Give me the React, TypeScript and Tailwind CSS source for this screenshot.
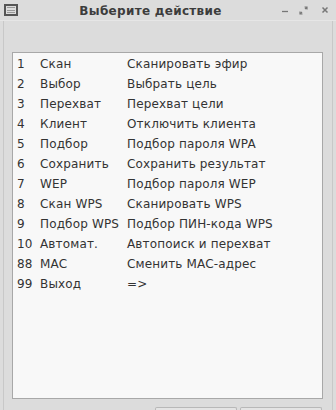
import React from "react";

const rows: [string, string, string][] = [
  ["1", "Скан", "Сканировать эфир"],
  ["2", "Выбор", "Выбрать цель"],
  ["3", "Перехват", "Перехват цели"],
  ["4", "Клиент", "Отключить клиента"],
  ["5", "Подбор", "Подбор пароля WPA"],
  ["6", "Сохранить", "Сохранить результат"],
  ["7", "WEP", "Подбор пароля WEP"],
  ["8", "Скан WPS", "Сканировать WPS"],
  ["9", "Подбор WPS", "Подбор ПИН-кода WPS"],
  ["10", "Автомат.", "Автопоиск и перехват"],
  ["88", "MAC", "Сменить MAC-адрес"],
  ["99", "Выход", "=>"],
];

export default function App() {
  return (
    <div
      className="w-[336px] h-[410px] bg-[#dcdcdc] overflow-hidden flex flex-col text-[#333333]"
      style={{ fontFamily: '"DejaVu Sans", "Liberation Sans", sans-serif' }}
    >
      {/* title bar */}
      <div className="h-[21px] shrink-0 flex items-center relative border-b border-[#e6e6e6]">
        <div className="ml-[4px] w-[14px] h-[12px] border-[2px] border-[#555555] flex flex-col justify-evenly px-[1px]">
          <div className="h-[1px] bg-[#999999]" />
          <div className="h-[1px] bg-[#999999]" />
          <div className="h-[1px] bg-[#999999]" />
        </div>
        <div className="absolute left-0 top-0 w-[300px] h-[21px] flex items-center justify-center pointer-events-none">
          <span className="text-[12px] font-bold text-[#3c3c3c] tracking-[0.3px] ml-[1px]">
            Выберите действие
          </span>
        </div>
        <div className="ml-auto mr-[7px] flex items-center gap-[10px]">
          <svg width="8" height="8" viewBox="0 0 8 8">
            <line x1="1" y1="5.5" x2="7" y2="5.5" stroke="#777" strokeWidth="1.3" />
          </svg>
          <svg width="9" height="9" viewBox="0 0 9 9">
            <path d="M1 8 L3 6 M1 5.5 L1 8 L3.5 8" stroke="#777" strokeWidth="1.2" fill="none" />
            <path d="M8 1 L6 3 M5.5 1 L8 1 L8 3.5" stroke="#777" strokeWidth="1.2" fill="none" />
          </svg>
          <svg width="8" height="8" viewBox="0 0 8 8" className="ml-[3px]">
            <path d="M1.5 1.5 L6.5 6.5 M6.5 1.5 L1.5 6.5" stroke="#777" strokeWidth="1.5" />
          </svg>
        </div>
      </div>

      {/* body */}
      <div className="flex-1 ml-[3px] w-[330px] border-x border-[#c8c8c8] pt-[31px] pl-[8px] pr-[9px] flex flex-col">
        <div className="h-[347px] bg-[#f8f8f8] border border-[#a8a8a8] pt-[1px]">
          {rows.map(([n, name, desc]) => (
            <div key={n} className="h-[20px] flex items-center text-[12px] leading-[20px] tracking-[0.15px]">
              <span className="w-[27px] pl-[4px] shrink-0">{n}</span>
              <span className="w-[87px] shrink-0 whitespace-nowrap">{name}</span>
              <span className="whitespace-nowrap">{desc}</span>
            </div>
          ))}
        </div>
        <div className="flex mt-[8px] ml-[143px] gap-[3px]">
          <div className="w-[82px] h-[10px] border-t border-x border-[#b8b8b8] bg-[#e4e4e4] rounded-t-[2px]" />
          <div className="w-[82px] h-[10px] border-t border-x border-[#b8b8b8] bg-[#e4e4e4] rounded-t-[2px]" />
        </div>
      </div>
    </div>
  );
}
